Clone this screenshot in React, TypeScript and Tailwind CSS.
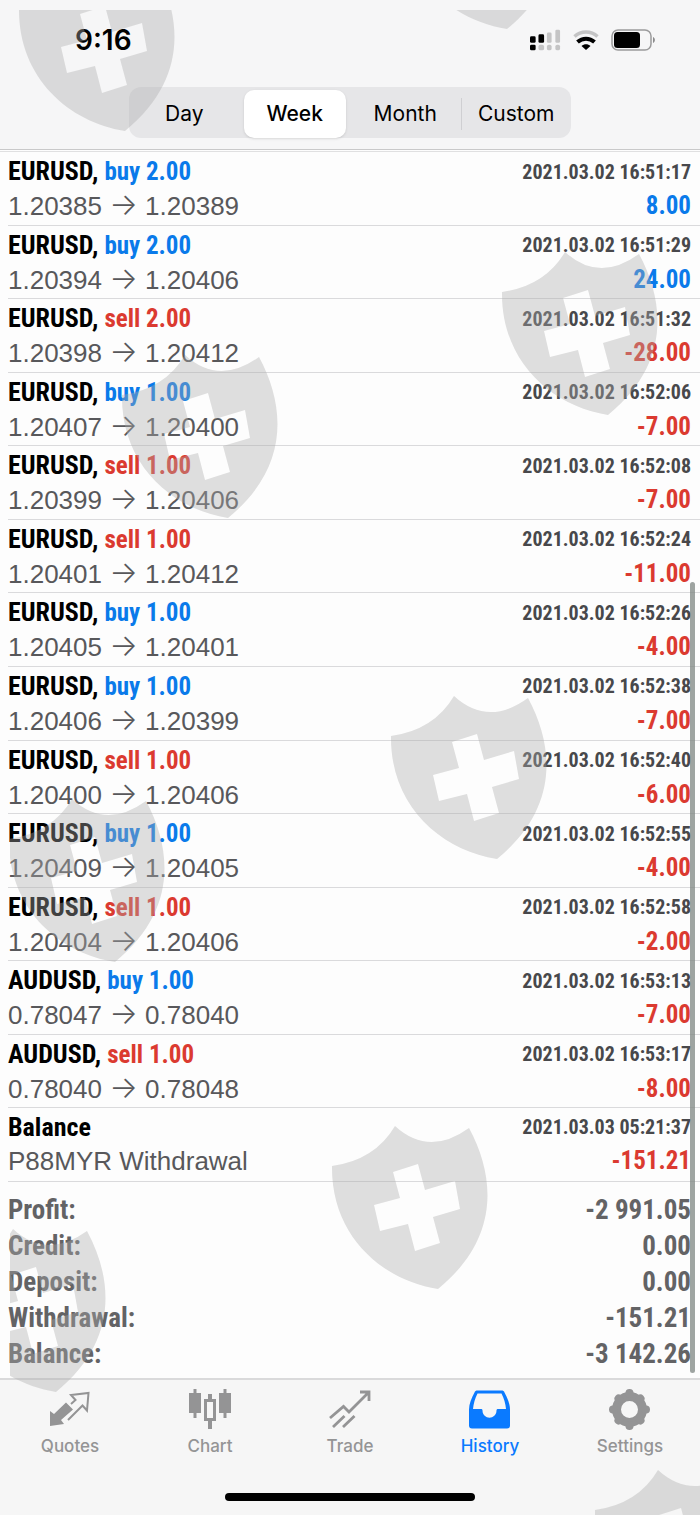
import type { ReactNode } from "react";

interface Deal {
  symbol: string;
  action: "buy" | "sell";
  volume: string;
  open: string;
  close: string;
  time: string;
  profit: string;
}

const ranges = ["Day", "Week", "Month", "Custom"];

const deals: Deal[] = [
  { symbol: "EURUSD", action: "buy", volume: "2.00", open: "1.20385", close: "1.20389", time: "2021.03.02 16:51:17", profit: "8.00" },
  { symbol: "EURUSD", action: "buy", volume: "2.00", open: "1.20394", close: "1.20406", time: "2021.03.02 16:51:29", profit: "24.00" },
  { symbol: "EURUSD", action: "sell", volume: "2.00", open: "1.20398", close: "1.20412", time: "2021.03.02 16:51:32", profit: "-28.00" },
  { symbol: "EURUSD", action: "buy", volume: "1.00", open: "1.20407", close: "1.20400", time: "2021.03.02 16:52:06", profit: "-7.00" },
  { symbol: "EURUSD", action: "sell", volume: "1.00", open: "1.20399", close: "1.20406", time: "2021.03.02 16:52:08", profit: "-7.00" },
  { symbol: "EURUSD", action: "sell", volume: "1.00", open: "1.20401", close: "1.20412", time: "2021.03.02 16:52:24", profit: "-11.00" },
  { symbol: "EURUSD", action: "buy", volume: "1.00", open: "1.20405", close: "1.20401", time: "2021.03.02 16:52:26", profit: "-4.00" },
  { symbol: "EURUSD", action: "buy", volume: "1.00", open: "1.20406", close: "1.20399", time: "2021.03.02 16:52:38", profit: "-7.00" },
  { symbol: "EURUSD", action: "sell", volume: "1.00", open: "1.20400", close: "1.20406", time: "2021.03.02 16:52:40", profit: "-6.00" },
  { symbol: "EURUSD", action: "buy", volume: "1.00", open: "1.20409", close: "1.20405", time: "2021.03.02 16:52:55", profit: "-4.00" },
  { symbol: "EURUSD", action: "sell", volume: "1.00", open: "1.20404", close: "1.20406", time: "2021.03.02 16:52:58", profit: "-2.00" },
  { symbol: "AUDUSD", action: "buy", volume: "1.00", open: "0.78047", close: "0.78040", time: "2021.03.02 16:53:13", profit: "-7.00" },
  { symbol: "AUDUSD", action: "sell", volume: "1.00", open: "0.78040", close: "0.78048", time: "2021.03.02 16:53:17", profit: "-8.00" },
];

const totals = [
  { label: "Profit:", value: "-2 991.05" },
  { label: "Credit:", value: "0.00" },
  { label: "Deposit:", value: "0.00" },
  { label: "Withdrawal:", value: "-151.21" },
  { label: "Balance:", value: "-3 142.26" },
];

export default function App() {
  return (
    <div className="relative flex min-h-screen flex-col overflow-hidden bg-[#fdfdfd] font-['Roboto_Condensed','Liberation_Sans_Narrow','Liberation_Sans',sans-serif] text-black">
      <Header />
      <main className="mt-px flex flex-1 flex-col border-t border-[#e0e0e1]">
        <ul className="grid flex-1 auto-rows-fr pl-2">
          {deals.map((deal) => (
            <HistoryRow
              key={deal.time}
              title={
                <>
                  {deal.symbol},{" "}
                  <span
                    className={`text-[25px] ${
                      deal.action === "buy" ? "text-[#0a7aea]" : "text-[#db3a30]"
                    }`}
                  >
                    {deal.action} {deal.volume}
                  </span>
                </>
              }
              detail={
                <>
                  {deal.open}{" "}
                  <span className="font-['Inter',sans-serif] text-[30px] leading-none font-light">→</span>{" "}
                  {deal.close}
                </>
              }
              time={deal.time}
              profit={deal.profit}
            />
          ))}
          <HistoryRow
            title="Balance"
            detail="P88MYR Withdrawal"
            time="2021.03.03 05:21:37"
            profit="-151.21"
          />
        </ul>
        <dl className="flex flex-col pt-2.5 pr-[9px] pb-1.5 pl-2 text-[27px] leading-9 font-bold text-[#636365]">
          {totals.map((total) => (
            <div key={total.label} className="flex justify-between">
              <dt>{total.label}</dt>
              <dd>{total.value}</dd>
            </div>
          ))}
        </dl>
      </main>
      <TabBar />
      <div className="absolute top-[582px] right-[5px] bottom-[142px] w-[5px] rounded-full bg-[#7d8582]/75" />
      <Watermarks />
    </div>
  );
}

// ============ HEADER ============

function Header() {
  return (
    <header className="border-b border-[#c9c9ca] bg-[#f6f6f7] font-['Inter',sans-serif]">
      <div className="flex h-[87px] items-start justify-between pt-6 pr-11 pl-[75px]">
        <time className="text-[28px] leading-8 font-semibold">9:16</time>
        <div className="flex h-8 items-center gap-3">
          <SignalIcon />
          <WifiIcon />
          <BatteryIcon />
        </div>
      </div>
      <div className="mx-auto mb-[11px] grid h-[51px] w-[442px] max-w-full grid-cols-4 rounded-xl bg-[#e6e6e8] py-[3px]">
        {ranges.map((range) => (
          <button
            key={range}
            type="button"
            aria-pressed={range === "Week"}
            className={`text-[21px] ${
              range === "Week"
                ? "mx-1 rounded-[10px] bg-white font-medium shadow"
                : range === "Custom"
                  ? "my-2 border-l border-[#cfcfd2]"
                  : ""
            }`}
          >
            {range}
          </button>
        ))}
      </div>
    </header>
  );
}

function SignalIcon() {
  return (
    <svg width="31" height="24" viewBox="0 0 33 24" aria-hidden="true">
      <g fill="#000">
        <rect x="0" y="8" width="6" height="7" rx="1.5" />
        <rect x="9" y="6" width="6" height="9" rx="1.5" />
        <rect x="0" y="17" width="6" height="6" rx="1.5" />
      </g>
      <g fill="#c4c4c5">
        <rect x="18" y="4" width="5" height="11" rx="1.5" />
        <rect x="27" y="1" width="5" height="14" rx="1.5" />
        <rect x="9" y="17" width="6" height="6" rx="2" />
        <rect x="18" y="17" width="5" height="6" rx="2" />
        <rect x="27" y="17" width="5" height="6" rx="2" />
      </g>
    </svg>
  );
}

function WifiIcon() {
  return (
    <svg width="26" height="20" viewBox="0 0 26 20" fill="none" aria-hidden="true">
      <path d="M1.5 6.5C8 .5 18 .5 24.5 6.5" stroke="#c4c4c5" strokeWidth="3.5" />
      <path d="M4.500 12c5-4.500 12-4.500 17 0" stroke="#000" strokeWidth="4" />
      <path d="M8.500 16c2.500-2.500 6.500-2.500 9 0l-4.500 4z" fill="#000" />
    </svg>
  );
}

function BatteryIcon() {
  return (
    <svg width="45" height="22" viewBox="0 0 45 22" aria-hidden="true">
      <rect x="1" y="1" width="39" height="20" rx="6" fill="none" stroke="#9b9b9c" strokeWidth="1.5" />
      <rect x="3" y="3" width="26" height="16" rx="3.5" fill="#000" />
      <path d="M42 8c2.500 1 2.500 5 0 6z" fill="#8b8b8c" />
    </svg>
  );
}

// ============ HISTORY ============

interface HistoryRowProps {
  title: ReactNode;
  detail: ReactNode;
  time: string;
  profit: string;
}

function HistoryRow({ title, detail, time, profit }: HistoryRowProps) {
  return (
    <li className="flex flex-col border-b border-[#dadadc] pt-0.5 pr-[9px]">
      <div className="flex items-center justify-between leading-[34px] font-bold">
        <span className="text-[26px]">{title}</span>
        <time className="text-[20px] text-[#48484b]">{time}</time>
      </div>
      <div className="flex items-center justify-between leading-[34px]">
        <span className="font-['Liberation_Sans',sans-serif] text-[26px] text-[#58585b]">
          {detail}
        </span>
        <span
          className={`text-[25px] font-bold ${
            profit.startsWith("-") ? "text-[#db3a30]" : "text-[#0a7aea]"
          }`}
        >
          {profit}
        </span>
      </div>
    </li>
  );
}

// ============ TAB BAR ============

function TabBar() {
  return (
    <footer className="border-t-2 border-[#dadadb] bg-[#f6f6f6] font-['Inter',sans-serif]">
      <nav className="grid h-[113px] grid-cols-5 pt-2">
        <Tab label="Quotes">
          <path d="M2 23 6 26 18 14.500 25 21.500 13 32 16 36 2 38Z" fill="currentColor" />
          <path
            d="M23 16 27.500 12 23 7 40.500 5 39 22.500 34.500 17.500 20 32"
            fill="none"
            stroke="currentColor"
            strokeWidth="2"
          />
        </Tab>
        <Tab label="Chart">
          <path
            d="M5.500 1h3v4H13v20H8.500v5h-3v-5H1V5h4.500zM35.500 1h3v4H43v20h-4.500v5h-3v-5H31V5h4.500z"
            fill="currentColor"
          />
          <path
            d="M20 6h4v5h4v22h-4v8h-4v-8h-4V11h4zM19 14v16h6V14z"
            fill="currentColor"
            fillRule="evenodd"
          />
        </Tab>
        <Tab label="Trade">
          <g fill="none" stroke="currentColor" strokeWidth="2.8">
            <path d="M2 30 15.500 18.500 21 24 40.500 4.500M32 4h9v9" />
            <path d="M5 39 16.500 28M15 39 26.500 28" />
          </g>
        </Tab>
        <Tab label="History" active>
          <path
            d="M9.500 2.500h24c1.500 0 2.500.5 3 2 3 6 5.500 11 5.500 17v16c0 2-1 3-3 3H4c-2 0-3-1-3-3v-16c0-6 2.500-11 5.500-17 .5-1.500 1.500-2 3-2zM9.500 5.500c-2.500 5-4 10-4.500 15.500h8c1 0 1.500.5 1.500 1.500 0 9.500 14 9.500 14 0 0-1 .5-1.500 1.500-1.500h8c-.5-5.500-2-10.500-4.500-15.500z"
            fill="currentColor"
            fillRule="evenodd"
          />
        </Tab>
        <Tab label="Settings">
          <circle cx="21.5" cy="21.5" r="13" fill="none" stroke="currentColor" strokeWidth="9" />
          <g stroke="currentColor" strokeWidth="8" strokeLinecap="round">
            <path d="M21.500 5v1M21.500 37v1M5 21.500h1M37 21.500h1M10.500 10.500l.5.5M32 32l.5.5M32.500 10.500l-.5.5M11 32l-.5.5" />
          </g>
        </Tab>
      </nav>
      <div className="mx-auto mb-[14px] h-2 w-[250px] rounded-full bg-black" />
    </footer>
  );
}

function Tab({
  label,
  active = false,
  children,
}: {
  label: string;
  active?: boolean;
  children: ReactNode;
}) {
  return (
    <a
      href="#"
      aria-current={active ? "page" : undefined}
      className={`flex flex-col items-center gap-1 text-[17px] leading-6 font-medium ${
        active ? "text-[#0a7aff]" : "text-[#949495]"
      }`}
    >
      <svg width="44" height="42" viewBox="0 0 44 42" aria-hidden="true">
        {children}
      </svg>
      <span>{label}</span>
    </a>
  );
}

// ============ WATERMARKS ============

const shields = [
  [18, -33],
  [400, -135],
  [501, 251],
  [121, 354],
  [390, 695],
  [8, 798],
  [331, 1125],
  [-51, 1228],
  [594, 1469],
];

function Watermarks() {
  return (
    <div className="pointer-events-none absolute top-[10px] right-0 bottom-0 left-[10px] overflow-hidden">
      <svg className="h-full w-full" fill="#ababab" fillOpacity="0.38" aria-hidden="true">
        {shields.map(([x, y]) => (
          <path
            key={`${x},${y}`}
            transform={`translate(${x - 10} ${y - 10})`}
            fillRule="evenodd"
            d="M1 41Q44 35 64 1 98 32 138 3C166 55 167 115 107 164 50 155 0 110 1 41ZM62 47 69 73 43 80 49 106 77 99 84 126 109 118 102 92 129 84 124 56 94 65 87 39Z"
          />
        ))}
      </svg>
    </div>
  );
}
